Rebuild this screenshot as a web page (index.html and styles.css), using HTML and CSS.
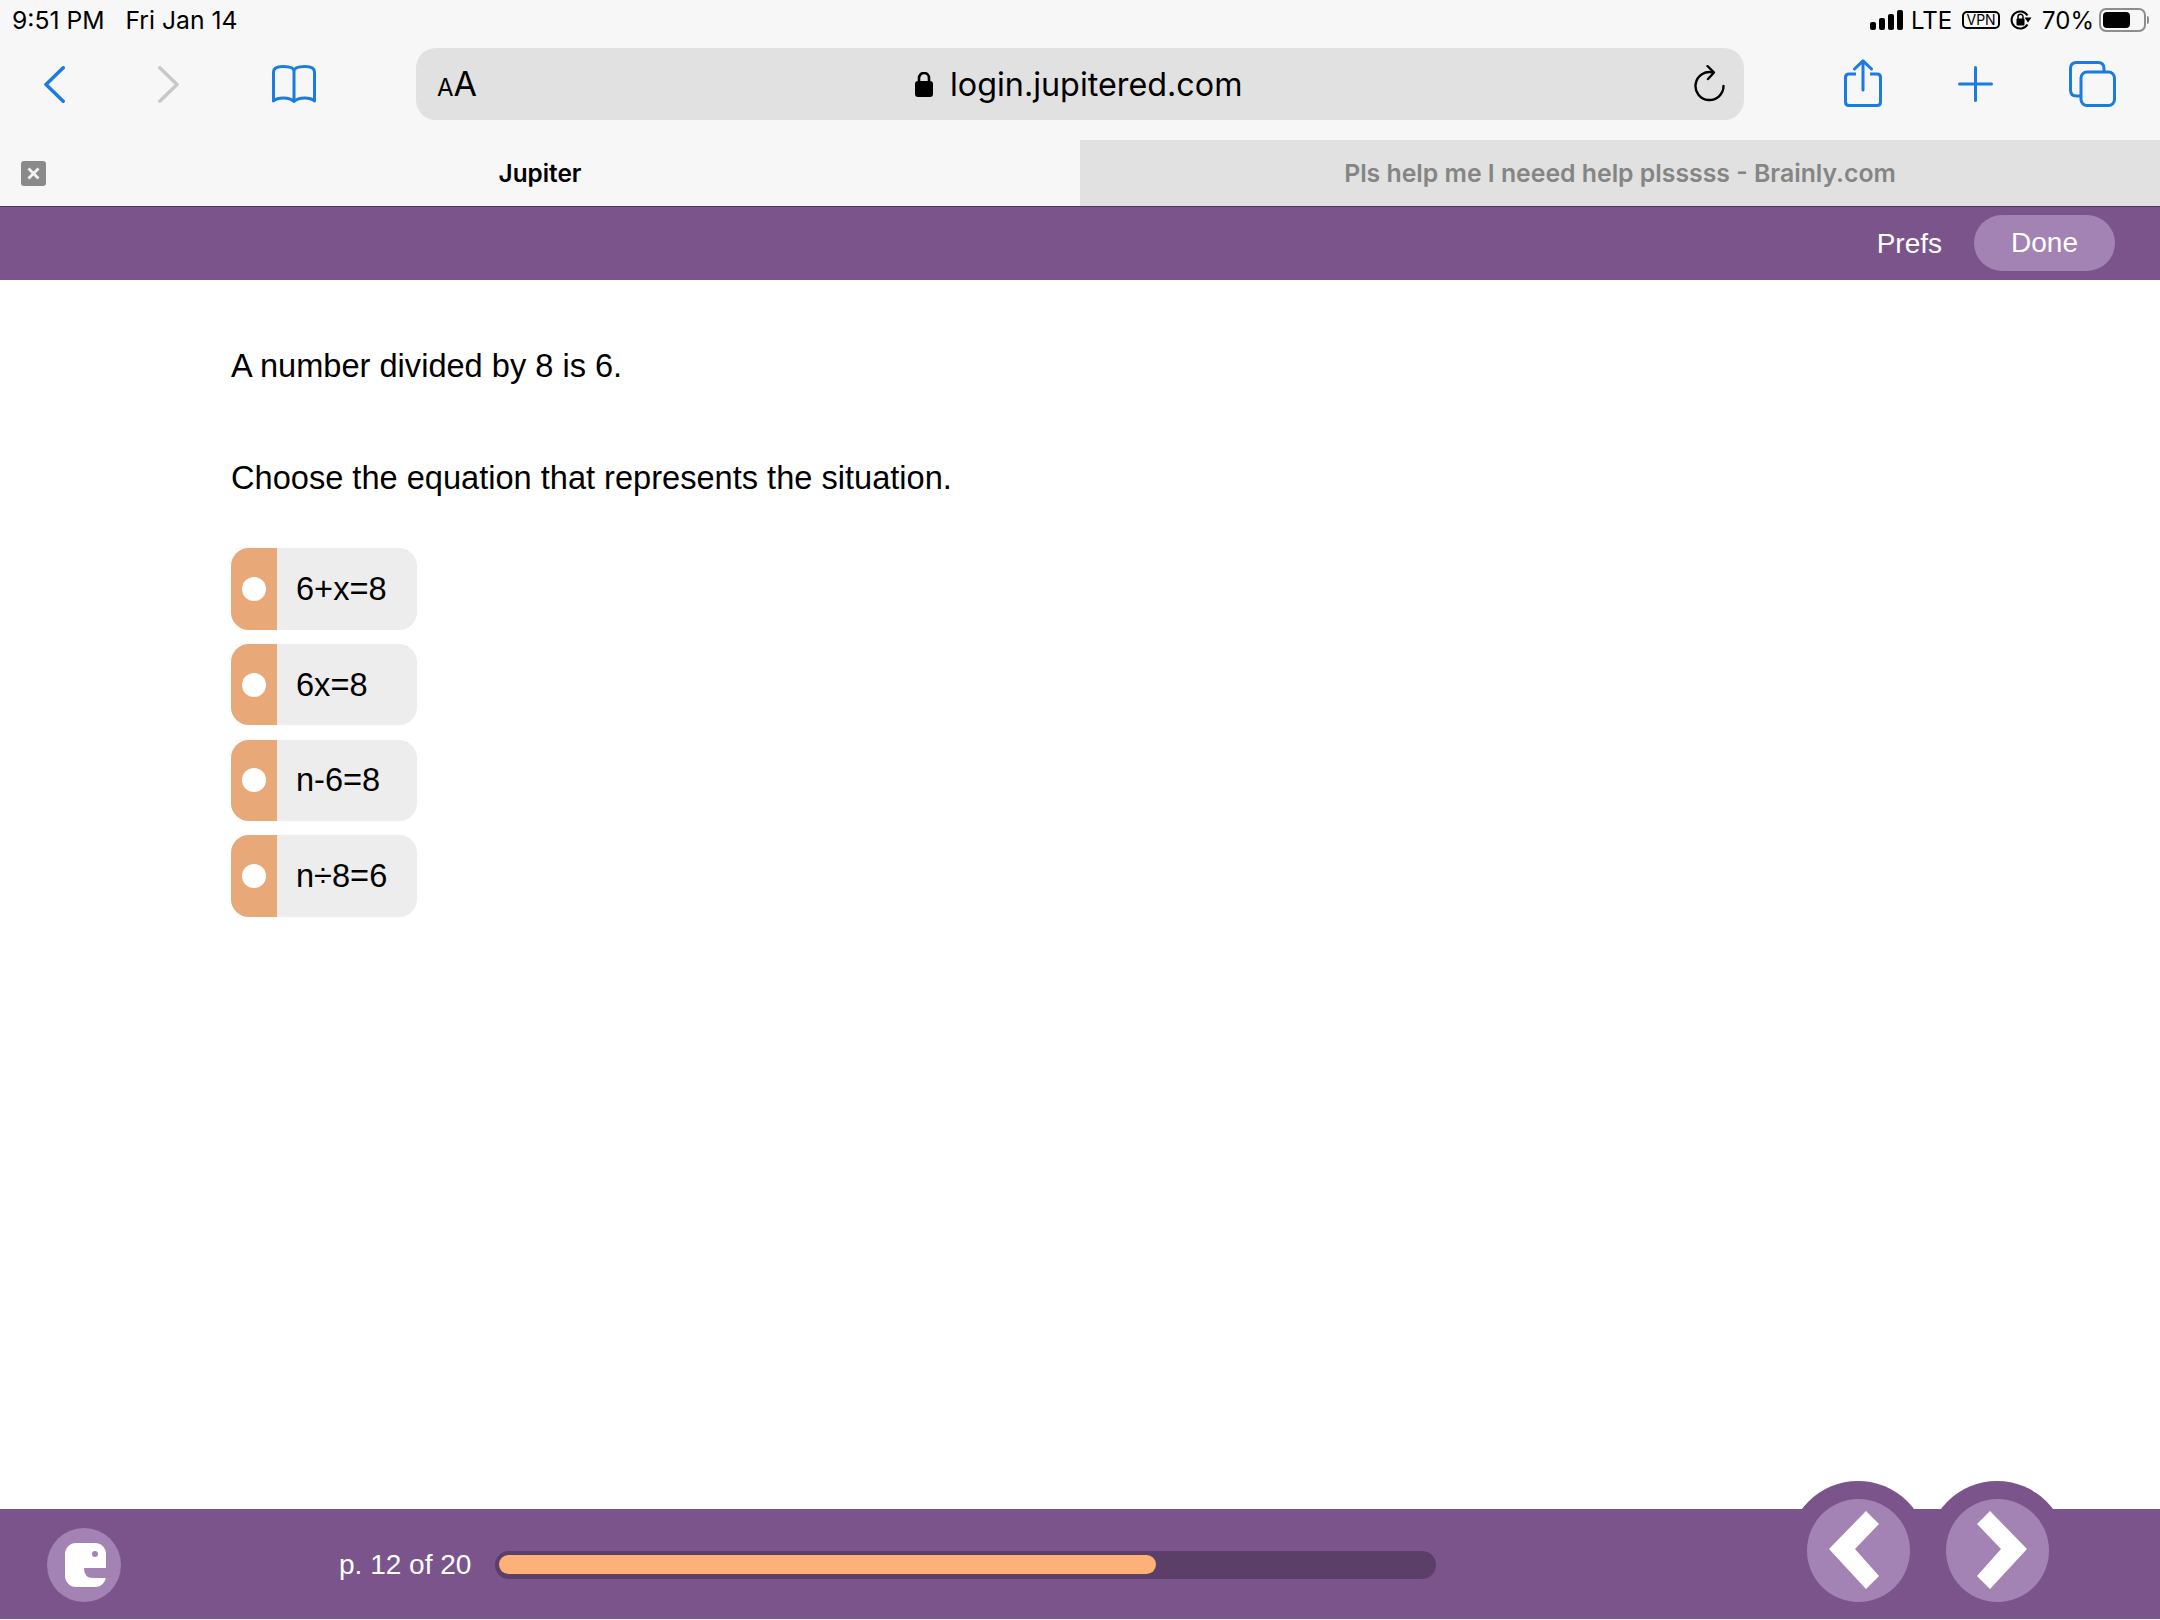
FILE: index.html
```html
<!DOCTYPE html>
<html>
<head>
    <title>Jupiter</title>
    <link rel="stylesheet" href="styles.css">
</head>
<body>

    <div class="status-bar">
        <span class="status-time">9:51 PM</span>
        <span class="status-date">Fri Jan 14</span>
        <div class="status-right">
            <svg class="signal" width="33" height="20" viewBox="0 0 33 20">
                <rect x="0" y="12" width="6" height="8" rx="2"/>
                <rect x="9" y="8" width="6" height="12" rx="2"/>
                <rect x="18" y="4" width="6" height="16" rx="2"/>
                <rect x="27" y="0" width="6" height="20" rx="2"/>
            </svg>
            <span class="lte">LTE</span>
            <span class="vpn">VPN</span>
            <svg class="rotlock" width="22" height="22" viewBox="0 0 22 22">
                <path d="M17.5 6.5A8.6 8.6 0 1 0 17.5 15.5" fill="none" stroke="#000" stroke-width="2"/>
                <path d="M14.5 8.5h7l-3.5 5z"/>
                <rect x="6.5" y="9.5" width="8" height="7" rx="1"/>
                <path d="M8 10V7.800a2.500 2.500 0 0 1 5 0V10" fill="none" stroke="#000" stroke-width="1.500"/>
            </svg>
            <span class="percent">70%</span>
            <div class="battery"><div class="battery-fill"></div></div>
            <div class="battery-nub"></div>
        </div>
    </div>

    <div class="toolbar">
        <div class="nav-buttons">
            <svg width="21" height="37" viewBox="0 0 21 37"><path d="M19.200 1.800L2 18.500L19.200 35.200" fill="none" stroke="#1a7be0" stroke-width="3.500" stroke-linecap="round" stroke-linejoin="round"/></svg>
            <svg width="21" height="37" viewBox="0 0 21 37"><path d="M1.800 1.800L19 18.500L1.800 35.200" fill="none" stroke="#c8c8c8" stroke-width="3.500" stroke-linecap="round" stroke-linejoin="round"/></svg>
            <svg width="44" height="38" viewBox="0 0 44 38"><path d="M22 6C22 3 18 1.500 11 1.500C5 1.500 1.500 3 1.500 7V36C6 32 17 32 22 36.500C27 32 38 32 42.500 36V7C42.500 3 39 1.500 33 1.500C26 1.500 22 3 22 6V36" fill="none" stroke="#1a7be0" stroke-width="3" stroke-linejoin="round" stroke-linecap="round"/></svg>
        </div>
        <div class="url-bar">
            <span class="aa"><span class="aa-small">A</span>A</span>
            <div class="url">
                <svg width="18" height="25" viewBox="0 0 18 25"><rect x="0" y="9" width="18" height="16" rx="3"/><path d="M4 10V6a5 5 0 0 1 10 0V10" fill="none" stroke="#000" stroke-width="2.600"/></svg>
                <span>login.jupitered.com</span>
            </div>
            <svg class="reload" width="32" height="38" viewBox="0 0 32 38"><path d="M19 7.500A14 14 0 1 0 29.500 21" fill="none" stroke="#000" stroke-width="2.400" stroke-linecap="round"/><path d="M13.500 1L20 7.500L14 14" fill="none" stroke="#000" stroke-width="2.400" stroke-linecap="round" stroke-linejoin="round"/></svg>
        </div>
        <div class="action-buttons">
            <svg width="38" height="48" viewBox="0 0 38 48"><path d="M12 15H5Q1.500 15 1.500 18.500V43Q1.500 46.500 5 46.500H33Q36.500 46.500 36.500 43V18.500Q36.500 15 33 15H26" fill="none" stroke="#1a7be0" stroke-width="3"/><path d="M19 31V2M10.500 10L19 1.800L27.500 10" fill="none" stroke="#1a7be0" stroke-width="3" stroke-linecap="round" stroke-linejoin="round"/></svg>
            <svg width="35" height="36" viewBox="0 0 35 36"><path d="M17.500 1.500V34.500M1.500 18H33.500" fill="none" stroke="#1a7be0" stroke-width="3" stroke-linecap="round"/></svg>
            <svg width="47" height="46" viewBox="0 0 47 46"><path d="M12 35H7.500Q1.500 35 1.500 29V7.500Q1.500 1.500 7.500 1.500H29Q35 1.500 35 7.500V11" fill="none" stroke="#1a7be0" stroke-width="3"/><rect x="12" y="11" width="33.500" height="33.500" rx="6" fill="none" stroke="#1a7be0" stroke-width="3"/></svg>
        </div>
    </div>

    <div class="tabs">
        <div class="tab tab-active">
            <div class="tab-close"><svg width="13" height="13" viewBox="0 0 13 13"><path d="M1.500 1.500L11.500 11.500M11.500 1.500L1.500 11.500" stroke="#f4f4f4" stroke-width="2.800"/></svg></div>
            Jupiter
        </div>
        <div class="tab tab-other">Pls help me I neeed help plsssss - Brainly.com</div>
    </div>

    <div class="top-bar">
        <span class="prefs">Prefs</span>
        <span class="done">Done</span>
    </div>

    <div class="main">
        <p class="question">A number divided by 8 is 6.</p>
        <p class="question">Choose the equation that represents the situation.</p>
        <div class="options">
            <div class="option"><div class="option-mark"><div class="radio"></div></div><span>6+x=8</span></div>
            <div class="option"><div class="option-mark"><div class="radio"></div></div><span>6x=8</span></div>
            <div class="option"><div class="option-mark"><div class="radio"></div></div><span>n-6=8</span></div>
            <div class="option"><div class="option-mark"><div class="radio"></div></div><span>n&divide;8=6</span></div>
        </div>
    </div>

    <div class="footer">
        <div class="logo">
            <svg width="74" height="74" viewBox="0 0 74 74">
                <rect x="18" y="15" width="41" height="44" rx="11" fill="#fff"/>
                <path d="M37 40H60V50H46Q37 50 37 40Z" fill="#a383b3"/>
                <circle cx="48" cy="26" r="3" fill="#a383b3"/>
            </svg>
        </div>
        <span class="page-label">p. 12 of 20</span>
        <div class="track"><div class="fill"></div></div>
        <div class="page-nav">
            <div class="bump"><div class="arrow">
                <svg width="102" height="102" viewBox="0 0 102 102"><polygon points="22,50 59,12 72,25 48,50 72,77 59,90" fill="#fff"/></svg>
            </div></div>
            <div class="bump"><div class="arrow">
                <svg width="102" height="102" viewBox="0 0 102 102"><polygon points="81,50 44,12 31,25 55,50 31,77 44,90" fill="#fff"/></svg>
            </div></div>
        </div>
    </div>

</body>
</html>
```

FILE: styles.css
```css
html, body {
    margin: 0;
    height: 1620px;
    overflow: hidden;
}
body {
    display: flex;
    flex-direction: column;
    padding-bottom: 1px;
    box-sizing: border-box;
    background-color: #fff;
    font-family: 'Liberation Sans', Arial, sans-serif;
    color: #000;
}
svg {
    display: block;
}

/* ipad status bar */
.status-bar {
    height: 40px;
    display: flex;
    align-items: center;
    padding-left: 12px;
    background-color: #f7f7f7;
    font-family: 'Inter', sans-serif;
    font-size: 24.7px;
}
.status-date {
    margin-left: 21px;
}
.status-right {
    margin-left: auto;
    display: flex;
    align-items: center;
    padding-right: 11px;
    font-size: 24px;
}
.lte {
    margin-left: 8px;
}
.vpn {
    margin-left: 10px;
    width: 38px;
    height: 18px;
    border: 2px solid #000;
    border-radius: 5px;
    box-sizing: border-box;
    font-size: 14px;
    line-height: 14px;
    text-align: center;
}
.rotlock {
    margin-left: 10px;
}
.percent {
    margin-left: 10px;
}
.battery {
    margin-left: 5px;
    width: 47px;
    height: 24px;
    padding: 2px;
    border: 2px solid #8e8e8e;
    border-radius: 7px;
    box-sizing: border-box;
}
.battery-fill {
    width: 27px;
    height: 100%;
    background-color: #000;
    border-radius: 4px;
}
.battery-nub {
    margin-left: 1px;
    width: 2px;
    height: 8px;
    background-color: #8e8e8e;
    border-radius: 0 2px 2px 0;
}

/* safari toolbar */
.toolbar {
    height: 100px;
    display: grid;
    grid-template-columns: 416px 1328px 1fr;
    align-items: start;
    background-color: #f7f7f7;
}
.nav-buttons {
    display: flex;
    align-items: center;
    gap: 93px;
    padding: 25px 0 0 44px;
}
.url-bar {
    margin-top: 8px;
    height: 72px;
    border-radius: 20px;
    background-color: #e1e1e1;
    display: flex;
    align-items: center;
    position: relative;
}
.aa {
    margin-left: 21px;
    font-family: 'Inter', sans-serif;
    font-size: 34px;
    line-height: 1;
}
.aa-small {
    font-size: 24px;
}
.url {
    position: absolute;
    left: 499px;
    top: 0;
    height: 72px;
    display: flex;
    align-items: center;
    gap: 17px;
    font-family: 'Inter', sans-serif;
    font-size: 32.3px;
}
.reload {
    margin-left: auto;
    margin-right: 18px;
}
.action-buttons {
    display: flex;
    align-items: flex-start;
    gap: 76px;
    padding: 19px 0 0 100px;
}
.action-buttons svg:nth-child(2) {
    margin-top: 7px;
}
.action-buttons svg:nth-child(3) {
    margin-top: 2px;
}

/* tabs */
.tabs {
    height: 66px;
    display: flex;
    background-color: #f7f7f7;
    font-family: 'Inter', sans-serif;
    font-size: 24.3px;
    font-weight: 600;
}
.tab {
    flex: 1;
    display: flex;
    align-items: center;
    justify-content: center;
    position: relative;
}
.tab-active {
    background-color: #f7f7f7;
    color: #000;
}
.tab-other {
    background-color: #e1e1e1;
    color: #858585;
    font-size: 24.8px;
}
.tab-close {
    position: absolute;
    left: 21px;
    top: 21px;
    width: 25px;
    height: 25px;
    border-radius: 3px;
    background-color: #8a8a8a;
    display: flex;
    align-items: center;
    justify-content: center;
}

/* app header */
.top-bar {
    height: 74px;
    box-sizing: border-box;
    border-top: 1px solid #4d3658;
    display: flex;
    align-items: center;
    justify-content: flex-end;
    padding-right: 45px;
    background-color: #7b548c;
    color: #fff;
    font-size: 28px;
}
.done {
    margin: 0 0 1px 32px;
    width: 141px;
    height: 56px;
    line-height: 56px;
    border-radius: 28px;
    background-color: #a383b3;
    text-align: center;
}

/* question */
.main {
    flex: 1;
    padding: 68px 0 0 231px;
}
.question {
    margin: 0 0 76px;
    font-size: 32.6px;
    line-height: 36px;
}
.options {
    margin-top: -24px;
    display: flex;
    flex-direction: column;
    gap: 14.25px;
}
.option {
    width: 186px;
    height: 81.5px;
    display: flex;
    align-items: center;
    border-radius: 18px;
    overflow: hidden;
    background-color: #ededed;
    font-size: 32.6px;
}
.option-mark {
    width: 46px;
    height: 100%;
    display: flex;
    align-items: center;
    justify-content: center;
    background-color: #e8a878;
}
.radio {
    width: 24px;
    height: 24px;
    border-radius: 50%;
    background-color: #fff;
}
.option span {
    margin-left: 19px;
}

/* footer */
.footer {
    height: 110px;
    display: flex;
    align-items: center;
    padding: 0 93px 0 47px;
    background-color: #7b548c;
    color: #fff;
    font-size: 28px;
}
.logo {
    width: 74px;
    height: 74px;
    margin-top: 2px;
    border-radius: 50%;
    background-color: #a383b3;
}
.page-label {
    margin-left: 218px;
    margin-top: 2px;
}
.track {
    margin-left: 24px;
    margin-top: 2px;
    width: 941px;
    height: 28px;
    padding: 4px;
    box-sizing: border-box;
    border-radius: 14px;
    background-color: #5b3f69;
}
.fill {
    width: 657px;
    height: 19px;
    border-radius: 10px;
    background-color: #fdb176;
}
.page-nav {
    margin-left: auto;
    align-self: flex-start;
    display: flex;
    margin-top: -28px;
}
.bump {
    width: 140px;
    height: 138px;
    padding-top: 18px;
    box-sizing: border-box;
    display: flex;
    justify-content: center;
    border-radius: 70px 70px 0 0;
    background-color: #7b548c;
}
.bump + .bump {
    margin-left: -1px;
}
.arrow {
    width: 103px;
    height: 103px;
    border-radius: 50%;
    background-color: #a383b3;
}
```
